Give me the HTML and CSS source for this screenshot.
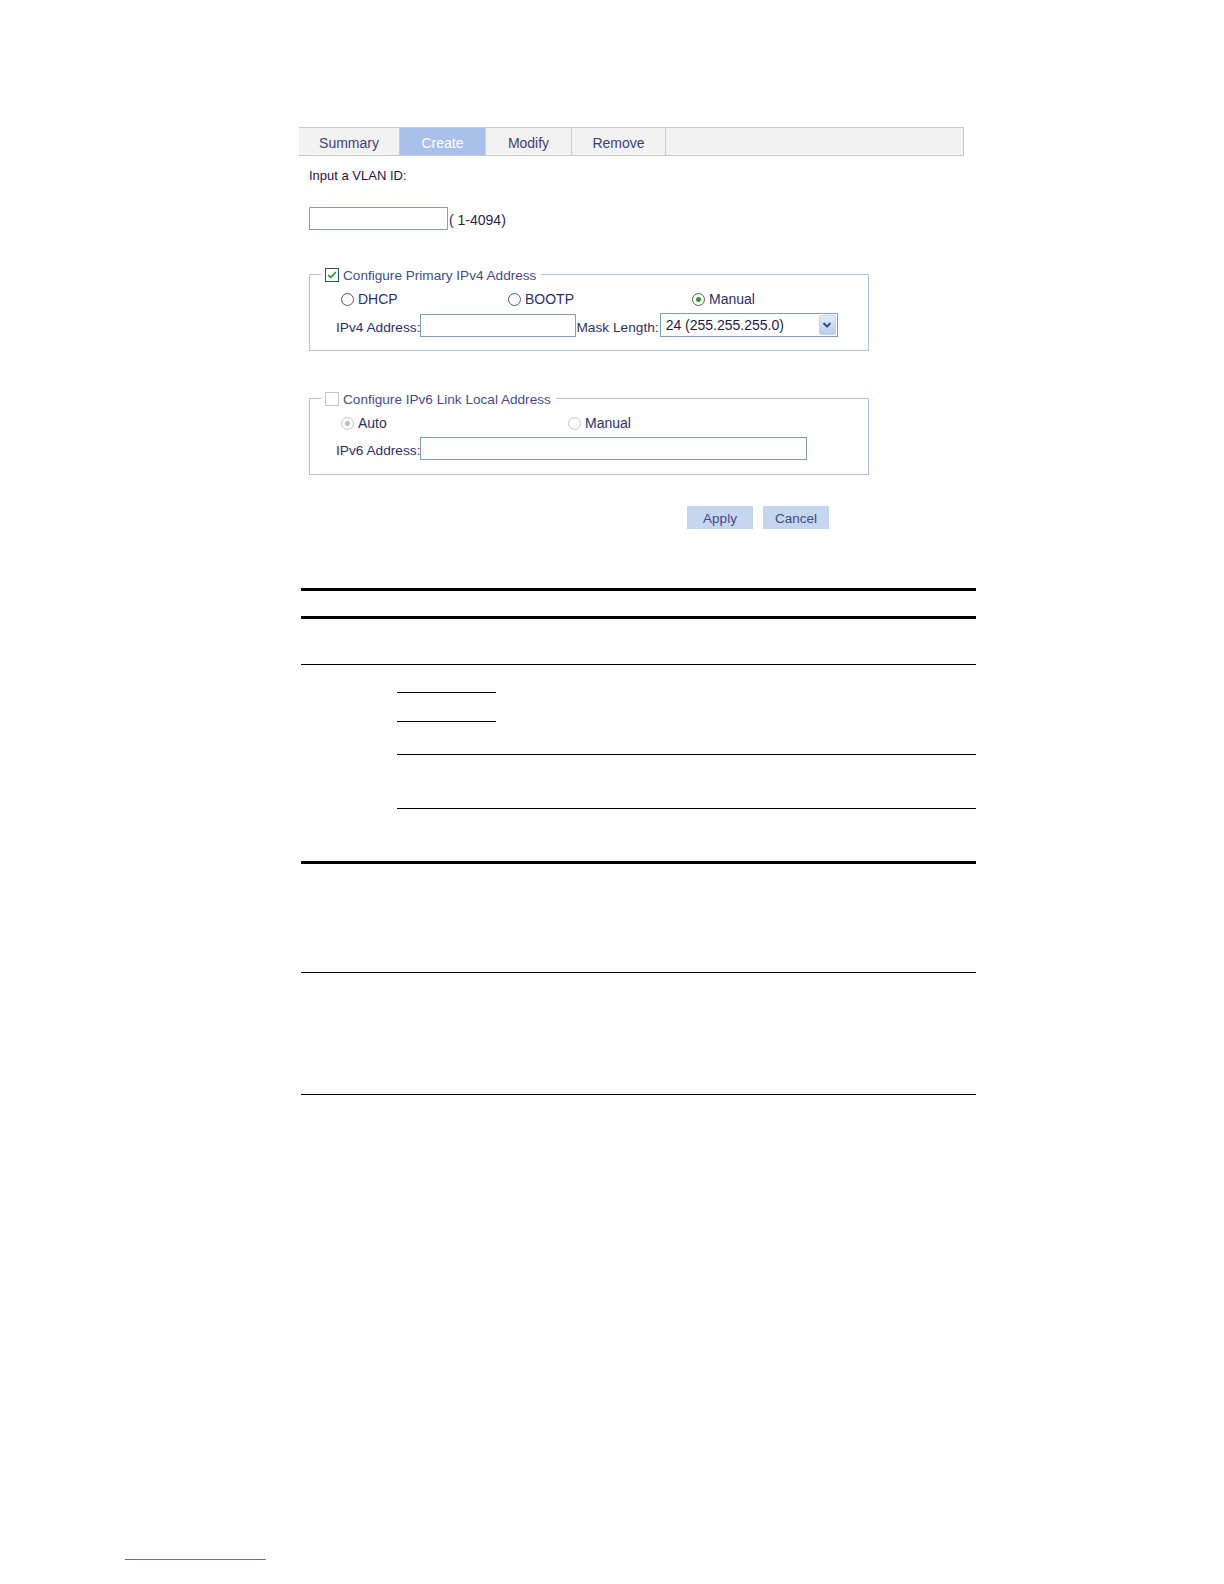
FILE: index.html
```html
<!DOCTYPE html>
<html>
<head>
<meta charset="utf-8">
<title>Create VLAN interface</title>
<link rel="stylesheet" href="styles.css">
</head>
<body>
<div class="page">
  <div class="ui">
    <div class="tabs">
      <div class="tab tab-summary">Summary</div>
      <div class="tab tab-create active">Create</div>
      <div class="tab tab-modify">Modify</div>
      <div class="tab tab-remove">Remove</div>
      <div class="tab-fill"></div>
    </div>
    <div class="form">
      <div class="vlan-label">Input a VLAN ID:</div>
      <div class="vlan-row">
        <span class="textbox vlan-input"></span><span class="hint">( 1-4094)</span>
      </div>

      <fieldset class="group group-v4">
        <legend class="legend">
          <span class="check checked"><svg viewBox="0 0 14 14" width="12" height="12"><path d="M2.5 7 L5.5 10 L11.5 3.5" fill="none" stroke="#21a121" stroke-width="2"/></svg></span>
          <span class="legend-text">Configure Primary IPv4 Address</span>
        </legend>
        <div class="radio-row">
          <label class="opt opt-dhcp"><span class="radio"></span>DHCP</label>
          <label class="opt opt-bootp"><span class="radio"></span>BOOTP</label>
          <label class="opt"><span class="radio on"></span>Manual</label>
        </div>
        <div class="field-row">
          <span class="label">IPv4 Address:</span><span class="textbox v4-input"></span><span class="label">Mask Length:</span>
          <span class="select">
            <span class="select-value">24 (255.255.255.0)</span>
            <span class="select-btn"><svg viewBox="0 0 10 8" width="10" height="8"><path d="M1.5 2 L5 5.5 L8.5 2" fill="none" stroke="#3a4f7a" stroke-width="2"/></svg></span>
          </span>
        </div>
      </fieldset>

      <fieldset class="group group-v6">
        <legend class="legend">
          <span class="check disabled"></span>
          <span class="legend-text">Configure IPv6 Link Local Address</span>
        </legend>
        <div class="radio-row">
          <label class="opt opt-auto"><span class="radio dis on-dis"></span>Auto</label>
          <label class="opt"><span class="radio dis"></span>Manual</label>
        </div>
        <div class="field-row">
          <span class="label">IPv6 Address:</span><span class="textbox v6-input"></span>
        </div>
      </fieldset>

      <div class="buttons">
        <span class="btn">Apply</span>
        <span class="btn">Cancel</span>
      </div>
    </div>
  </div>

  <div class="doc-table">
    <div class="t-head"></div>
    <div class="t-row t-row1"></div>
    <div class="t-row t-row2">
      <div class="t-left"></div>
      <div class="t-right">
        <div class="sub sub-short sub-a"></div>
        <div class="sub sub-short sub-b"></div>
        <div class="sub sub-long sub-c"></div>
        <div class="sub sub-long sub-d"></div>
      </div>
    </div>
    <div class="t-row t-row3"></div>
    <div class="t-row t-row4"></div>
  </div>

  <div class="footer-link"></div>
</div>
</body>
</html>
```

FILE: styles.css
```css
html, body {
  margin: 0;
  padding: 0;
  background: #ffffff;
}

body {
  font-family: "Liberation Sans", Arial, sans-serif;
  font-size: 13px;
  color: #3d3d78;
}

.page {
  width: 1224px;
  min-height: 1584px;
  padding-top: 127px;
  box-sizing: border-box;
}

.ui {
  margin-left: 299px;
  width: 665px;
}

/* Tabs */
.tabs {
  display: flex;
  height: 29px;
  border: 1px solid #c9c9c9;
  border-left: none;
  box-sizing: border-box;
  background: #f2f2f2;
}

.tab {
  height: 100%;
  display: flex;
  align-items: center;
  justify-content: center;
  font-size: 14px;
  color: #3f3f7f;
  border-right: 1px solid #cfcfcf;
  box-sizing: border-box;
  padding-top: 3px;
}

.tab-summary { width: 101px; }
.tab-create { width: 86px; }
.tab-modify { width: 86px; }
.tab-remove { width: 94px; }

.tab.active {
  background: #a9c1ea;
  color: #ffffff;
  border-right-color: #c6d3ea;
}

.tab-fill { flex: 1; }

/* Form */
.form {
  padding-left: 10px;
}

.vlan-label {
  margin-top: 12px;
  line-height: 16px;
  color: #2e0f3a;
}

.vlan-row {
  margin-top: 23px;
  display: flex;
  align-items: center;
}

.textbox {
  display: inline-block;
  height: 23px;
  border: 1px solid #7f9db9;
  box-sizing: border-box;
  background: #fff;
}

.vlan-input { width: 139px; }

.hint {
  padding-left: 1px;
  padding-top: 3px;
  font-size: 14px;
  color: #2e1f45;
}

.group {
  margin: 0;
  padding: 0 0 13px 0;
  width: 560px;
  box-sizing: border-box;
  border: 1px solid #aec3da;
  min-width: 0;
}

.group-v4 { margin-top: 37px; }
.group-v6 { margin-top: 40px; padding-bottom: 14px; }

.legend {
  margin-left: 11px;
  padding: 0 5px 0 4px;
  display: flex;
  align-items: center;
  height: 15px;
  color: #4a4a8a;
  font-size: 13.6px;
}

.check {
  display: inline-block;
  width: 14px;
  height: 14px;
  box-sizing: border-box;
  border: 1px solid #1c5180;
  background: #fff;
  margin-right: 4px;
  position: relative;
}

.check svg {
  position: absolute;
  left: 0;
  top: 0;
}

.check.disabled {
  border-color: #c6c6c6;
}

.legend-text {
  line-height: 15px;
  padding-top: 2px;
}

.radio-row {
  display: flex;
  align-items: center;
  margin-top: 9px;
  padding-left: 31px;
  height: 16px;
  font-size: 14px;
}

.opt {
  display: flex;
  align-items: center;
  color: #2f2f66;
}

.opt-dhcp { width: 167px; }
.opt-bootp { width: 184px; }
.opt-auto { width: 227px; }

.radio {
  display: inline-block;
  width: 13px;
  height: 13px;
  box-sizing: border-box;
  border: 1px solid #5b5b5b;
  border-radius: 50%;
  background: #fdfdfd;
  margin-right: 4px;
  position: relative;
}

.radio.on::after {
  content: "";
  position: absolute;
  left: 3px;
  top: 3px;
  width: 5px;
  height: 5px;
  border-radius: 50%;
  background: #2b9a2b;
}

.radio.dis {
  border-color: #c6c6c6;
}

.radio.on-dis::after {
  content: "";
  position: absolute;
  left: 3px;
  top: 3px;
  width: 5px;
  height: 5px;
  border-radius: 50%;
  background: #bdbdbd;
}

.field-row {
  display: flex;
  align-items: center;
  margin-top: 7px;
  padding-left: 26px;
  font-size: 13.7px;
}

.group-v6 .field-row { margin-top: 6px; }

.label {
  color: #2f2f66;
  padding-top: 4px;
}

.v4-input { width: 156px; }
.v6-input { width: 387px; }

.select {
  display: flex;
  align-items: center;
  margin-left: 1px;
  width: 178px;
  height: 24px;
  border: 1px solid #7f9db9;
  box-sizing: border-box;
  background: #fff;
  margin-top: -1px;
}

.select-value {
  flex: 1;
  padding-left: 5px;
  font-size: 14px;
  color: #1e1e3c;
}

.select-btn {
  width: 17px;
  height: 20px;
  margin-right: 1px;
  box-sizing: border-box;
  border: 1px solid #c3d3f5;
  border-radius: 2px;
  background: linear-gradient(#e3ebfb, #b9cbef);
  display: flex;
  align-items: center;
  justify-content: center;
}

.buttons {
  display: flex;
  gap: 10px;
  margin-top: 31px;
  padding-left: 378px;
}

.btn {
  width: 66px;
  height: 23px;
  display: flex;
  align-items: center;
  justify-content: center;
  background: #c6d6f0;
  color: #3f4a85;
  font-size: 13.5px;
  padding-top: 2px;
  box-sizing: border-box;
}

/* Document table lines */
.doc-table {
  margin-left: 301px;
  margin-top: 59px;
  width: 675px;
}

.t-head {
  height: 25px;
  border-top: 3px solid #000;
  border-bottom: 3px solid #000;
}

.t-row {
  border-bottom: 1px solid #000;
}

.t-row1 { height: 45px; }

.t-row2 {
  display: flex;
  border-bottom: 3px solid #000;
}

.t-left { width: 96px; }

.t-right {
  flex: 1;
  padding-bottom: 52px;
}

.sub {
  border-bottom: 1px solid #000;
  box-sizing: border-box;
}

.sub-short { width: 99px; }
.sub-a { height: 28px; }
.sub-b { height: 29px; }
.sub-c { height: 33px; }
.sub-d { height: 54px; }

.t-row3 { height: 108px; }
.t-row4 { height: 121px; }

.footer-link {
  margin-left: 125px;
  margin-top: 464px;
  width: 141px;
  height: 1px;
  background: #5d6fb0;
}
```
